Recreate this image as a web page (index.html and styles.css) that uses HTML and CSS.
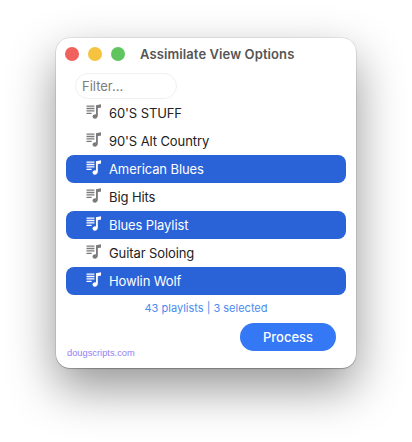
FILE: index.html
```html
<!DOCTYPE html>
<html lang="en">
<head>
<meta charset="utf-8">
<title>Assimilate View Options</title>
<link rel="stylesheet" href="styles.css">
</head>
<body>
<svg class="defs" width="0" height="0" aria-hidden="true">
  <symbol id="pl" viewBox="0 0 17 16">
    <path d="M0.5 2.2H9M0.5 4.8H9M0.5 7.4H9M0.5 10H6" fill="none" stroke="currentColor" stroke-width="1.4"/>
    <path d="M10.6 1.4L16 0.2V3.6L12.6 4.4V12.2C12.6 14.2 11.2 15.6 9.3 15.6C7.9 15.6 6.9 14.7 6.9 13.4C6.9 12 8.2 10.9 9.7 10.9C10 10.9 10.3 11 10.6 11.1Z" fill="currentColor"/>
  </symbol>
</svg>
<main class="window">
  <header class="titlebar">
    <span class="light red"></span><span class="light yellow"></span><span class="light green"></span>
    <h1 class="title">Assimilate View Options</h1>
  </header>
  <div class="filter">Filter...</div>
  <ul class="list">
    <li class="row"><svg class="icon"><use href="#pl"/></svg><span>60'S STUFF</span></li>
    <li class="row"><svg class="icon"><use href="#pl"/></svg><span>90'S Alt Country</span></li>
    <li class="row selected"><svg class="icon"><use href="#pl"/></svg><span>American Blues</span></li>
    <li class="row"><svg class="icon"><use href="#pl"/></svg><span>Big Hits</span></li>
    <li class="row selected"><svg class="icon"><use href="#pl"/></svg><span>Blues Playlist</span></li>
    <li class="row"><svg class="icon"><use href="#pl"/></svg><span>Guitar Soloing</span></li>
    <li class="row selected"><svg class="icon"><use href="#pl"/></svg><span>Howlin Wolf</span></li>
  </ul>
  <p class="status">43 playlists | 3 selected</p>
  <div class="actions"><button class="process">Process</button></div>
  <a class="site">dougscripts.com</a>
</main>
</body>
</html>
```

FILE: styles.css
```css
html, body {
  margin: 0;
  height: 442px;
  overflow: hidden;
  background: #fff;
}
body {
  padding: 38px 56px 0;
  box-sizing: border-box;
  font-family: Inter, "Liberation Sans", sans-serif;
}
.defs { display: block; height: 0; }
.window {
  width: 300px;
  height: 330px;
  box-sizing: border-box;
  background: #fff;
  border-radius: 14px;
  box-shadow: 0 0 0 0.5px rgba(0,0,0,.14), 0 1px 1px rgba(0,0,0,.22), 0 20px 48px 0 rgba(0,0,0,.42);
  overflow: hidden;
  display: flex;
  flex-direction: column;
}
.titlebar {
  height: 32px;
  flex: none;
  display: flex;
  align-items: center;
  padding: 0 0 0 9px;
  gap: 9px;
}
.light {
  width: 14px;
  height: 14px;
  border-radius: 50%;
  flex: none;
}
.red { background: #f0605c; }
.yellow { background: #f6c341; }
.green { background: #60c55f; }
.title {
  margin: 0 0 0 6px;
  font-size: 13px;
  font-weight: 600;
  letter-spacing: .1px;
  color: #555;
  white-space: nowrap;
}
.filter {
  margin: 3px 0 0 19px;
  width: 102px;
  height: 26px;
  box-sizing: border-box;
  border: 1px solid #f0f0f0;
  border-radius: 13px;
  padding: 0 6px;
  font-size: 13px;
  line-height: 24px;
  color: #7d7d7d;
  flex: none;
}
.list {
  list-style: none;
  margin: 0 10px;
  padding: 0;
}
.row {
  height: 28px;
  display: flex;
  align-items: center;
  padding-left: 20px;
  font-size: 13px;
  letter-spacing: -.1px;
  color: #222;
  border-radius: 8px;
}
.row .icon {
  width: 16px;
  height: 15px;
  margin-right: 7px;
  margin-top: -3px;
  color: #7b7b7b;
  flex: none;
}
.selected {
  background: #2a63d8;
  color: #fff;
}
.selected .icon { color: #fff; }
.status {
  margin: 6px 0 0;
  height: 15px;
  line-height: 15px;
  text-align: center;
  font-size: 11px;
  font-weight: 400;
  color: #4a8bf0;
  flex: none;
}
.actions {
  display: flex;
  justify-content: flex-end;
  padding: 7px 20px 0 0;
}
.process {
  width: 96px;
  height: 28px;
  border: 0;
  border-radius: 14px;
  background: #3478f6;
  color: #fff;
  font: 500 13px Inter, "Liberation Sans", sans-serif;
}
.site {
  margin: -4px 0 0 11px;
  font-family: "Liberation Sans", sans-serif;
  font-size: 9.3px;
  line-height: 12px;
  height: 12px;
  color: #8f82f5;
}
```
